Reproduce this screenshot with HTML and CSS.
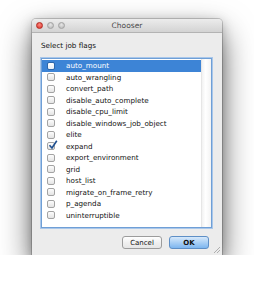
FILE: index.html
```html
<!DOCTYPE html>
<html lang="en">

<head>
    <meta charset="UTF-8">
    <title>Chooser</title>
    <link rel="stylesheet" href="styles.css">
</head>

<body>

    <div class="window">
        <div class="titlebar">
            <div class="lights">
                <span class="light close"></span>
                <span class="light"></span>
                <span class="light"></span>
            </div>
            <div class="title">Chooser</div>
        </div>

        <div class="content">
            <div class="prompt">Select job flags</div>

            <div class="list">
                <div class="rows">
                    <div class="row selected"><span class="box"></span>auto_mount</div>
                    <div class="row"><span class="box"></span>auto_wrangling</div>
                    <div class="row"><span class="box"></span>convert_path</div>
                    <div class="row"><span class="box"></span>disable_auto_complete</div>
                    <div class="row"><span class="box"></span>disable_cpu_limit</div>
                    <div class="row"><span class="box"></span>disable_windows_job_object</div>
                    <div class="row"><span class="box"></span>elite</div>
                    <div class="row"><span class="box checked">
                        <svg width="10" height="10" viewBox="0 0 10 10"><path d="M1.5 5.2 L4 8 L8.8 0.8" fill="none" stroke="#1f4f8f" stroke-width="1.6"/></svg>
                    </span>expand</div>
                    <div class="row"><span class="box"></span>export_environment</div>
                    <div class="row"><span class="box"></span>grid</div>
                    <div class="row"><span class="box"></span>host_list</div>
                    <div class="row"><span class="box"></span>migrate_on_frame_retry</div>
                    <div class="row"><span class="box"></span>p_agenda</div>
                    <div class="row"><span class="box"></span>uninterruptible</div>
                </div>
                <div class="scrollbar"></div>
            </div>

            <div class="buttons">
                <button class="btn">Cancel</button>
                <button class="btn default">OK</button>
            </div>
        </div>

        <svg class="grip" width="8" height="8" viewBox="0 0 8 8">
            <path d="M1 7 L7 1 M4 7 L7 4" stroke="#a0a0a0" stroke-width="0.8"/>
        </svg>
    </div>

</body>

</html>
```

FILE: styles.css
```css
* {
    margin: 0;
    padding: 0;
    box-sizing: border-box;
    font-family: 'DejaVu Sans', sans-serif;
}

body {
    background: #fff;
    padding: 19px 0 0 32px;
}

.window {
    position: relative;
    width: 190px;
    height: 236px;
    background: #ececec;
    border-radius: 4px 4px 0 0;
    box-shadow: 0 14px 32px rgba(0, 0, 0, 0.6), 0 3px 12px rgba(0, 0, 0, 0.25), 0 0 0 1px rgba(0, 0, 0, 0.18);
}

.titlebar {
    height: 14px;
    display: flex;
    align-items: center;
    position: relative;
    background: linear-gradient(#ececec, #d3d3d3);
    border-bottom: 1px solid #b3b3b3;
    border-radius: 4px 4px 0 0;
}

.lights {
    display: flex;
    gap: 4px;
    padding-left: 4px;
}

.light {
    width: 7px;
    height: 7px;
    border-radius: 50%;
    background: radial-gradient(circle at 50% 35%, #e6e6e6, #b4b4b4);
    border: 1px solid #a2a2a2;
}

.light.close {
    background: radial-gradient(circle at 50% 35%, #ff8a80, #d8312a);
    border-color: #b32a22;
}

.title {
    position: absolute;
    left: 0;
    right: 0;
    text-align: center;
    font-size: 7.5px;
    color: #4a4a4a;
}

.content {
    padding: 8px 10px 0 9px;
}

.prompt {
    font-size: 7.2px;
    color: #111;
    height: 17px;
}

.list {
    display: flex;
    height: 170px;
    background: #fff;
    border: 1px solid #6f9fd6;
    box-shadow: 0 0 0 1px #a9c7ea;
}

.rows {
    flex: 1;
    padding-top: 1px;
}

.row {
    height: 11.5px;
    display: flex;
    align-items: center;
    font-size: 7.2px;
    color: #111;
}

.row.selected {
    background: #3d84d6;
    color: #fff;
}

.box {
    width: 8px;
    height: 8px;
    margin: 0 11px 0 5px;
    border: 1px solid #a3a3a3;
    border-radius: 2px;
    background: linear-gradient(#fdfdfd, #e4e4e4);
    position: relative;
}

.row.selected .box {
    border-color: #2d66aa;
    background: linear-gradient(#ffffff, #e8eef7);
}

.box svg {
    position: absolute;
    left: 0;
    top: -3px;
}

.scrollbar {
    width: 10px;
    background: linear-gradient(to right, #f2f2f2, #ffffff 40%, #f3f3f3);
    border-left: 1px solid #e6e6e6;
}

.buttons {
    display: flex;
    justify-content: flex-end;
    gap: 7px;
    padding: 8px 3px 0 0;
}

.btn {
    width: 40px;
    height: 13px;
    font-size: 7px;
    color: #111;
    border: 1px solid #9c9c9c;
    border-radius: 3px;
    background: linear-gradient(#ffffff, #f0f0f0 50%, #e6e6e6);
}

.btn.default {
    font-weight: bold;
    border-color: #5e8fc6;
    background: linear-gradient(#d7e9fb, #a9cff5 50%, #7db6ef);
}

.grip {
    position: absolute;
    right: 1px;
    bottom: 1px;
}
```
